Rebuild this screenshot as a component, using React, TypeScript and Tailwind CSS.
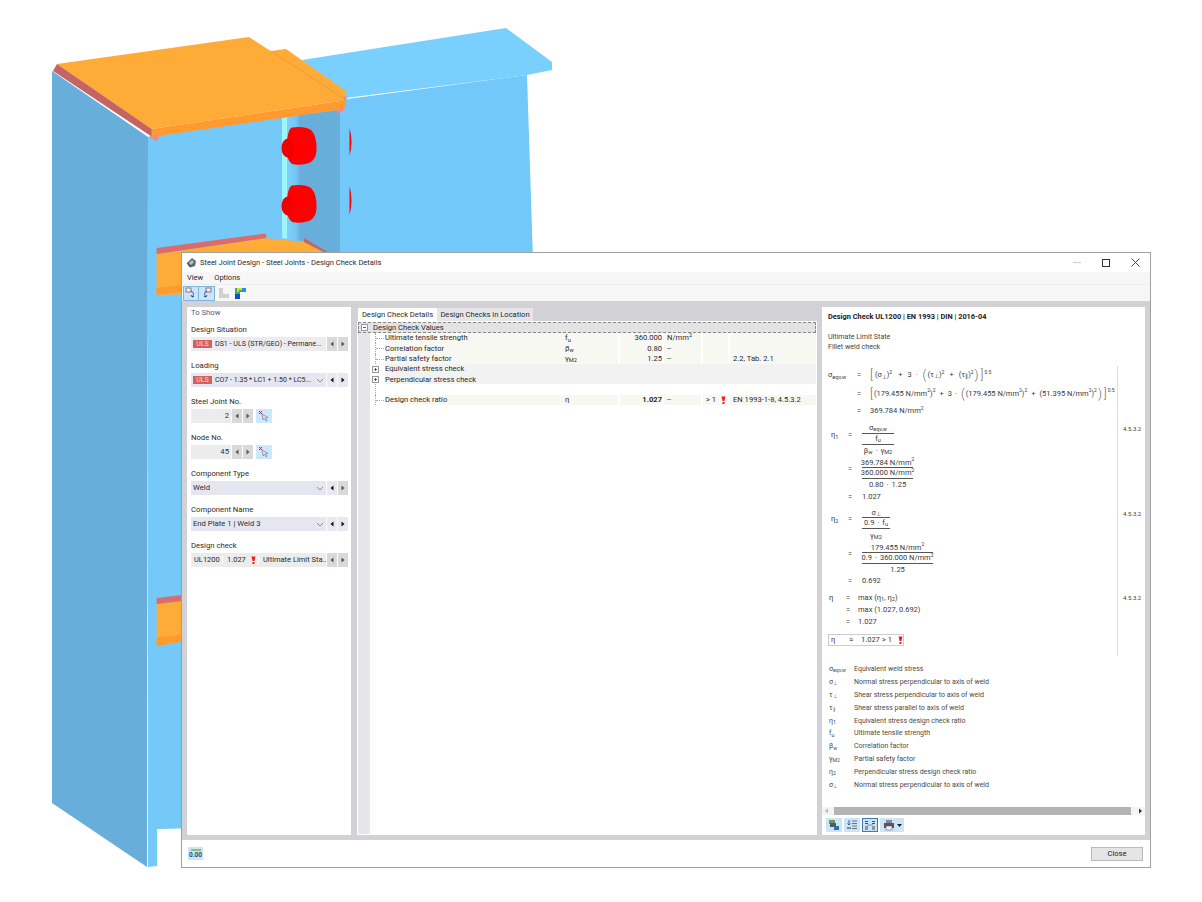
import React from 'react';

const SANS = "font-['Roboto','Noto_Sans',sans-serif]";

// Background 3D model of the joint
function Scene() {
  return (
    <svg className="absolute left-0 top-0" width="1202" height="902" viewBox="0 0 1202 902">
      <defs>
        <linearGradient id="webShade" x1="0" y1="0" x2="1" y2="0">
          <stop offset="0" stopColor="#7cd2fb" />
          <stop offset="0.7" stopColor="#74c6f4" />
          <stop offset="1" stopColor="#68aedb" />
        </linearGradient>
      </defs>
      {/* right beam */}
      <polygon points="340,100 527,75 533,260 533,700 340,700" fill="#72c8f8" />
      <polygon points="302,60 506,28 552,62 552,70 527,75 346,98" fill="#79cffe" />
      {/* column front face */}
      <polygon points="148,137 344,108 344,825 157,829 157,866 148,867" fill="#74c9f9" />
      {/* column side */}
      <polygon points="52,71 148,137 147,867 52,803" fill="#68aedb" />
      {/* web recess */}
      <polygon points="300,115 340,110 340,258 300,240" fill="#68aedb" />
      <polygon points="287,117 300,115 300,241 287,239" fill="url(#webShade)" />
      <polygon points="282,118 287,117 287,239 282,238" fill="#9ff5fe" />
      {/* top plate */}
      <polygon points="271,51 286,49 346,91 346,100" fill="#ffab38" />
      <polygon points="57,64 249,37 346,100 151,129" fill="#ffab38" />
      <line x1="271" y1="51" x2="346" y2="100" stroke="#f0922c" strokeWidth="1" />
      <polygon points="151,129 346,100 346,106 344,109 151,137" fill="#ff9a2e" />
      <polygon points="53,71 57,64 151.5,129 151.5,136.5" fill="#c46463" />
      <polygon points="148,137 160,134 157,141" fill="#f08a80" />
      <polygon points="336,110 347,107 338,114" fill="#f08a80" />
      <polygon points="344,96 348,98 344,100" fill="#f08a80" />
      {/* upper bolts */}
      <path d="M292 127.500Q305 126 311 130Q317 136 316.500 150Q316 160 309 163Q300 166 292 164Q286 160 287 146Q287 130 292 127.500Z" fill="#fe0000" />
      <ellipse cx="288" cy="148" rx="6.500" ry="9.500" fill="#f20000" />
      <path d="M292 185.500Q305 184 311 188Q317 194 316.500 208Q316 218 309 221Q300 224 292 222Q286 218 287 204Q287 188 292 185.500Z" fill="#fe0000" />
      <ellipse cx="288" cy="206" rx="6.500" ry="9.500" fill="#f20000" />
      <path d="M349.500 128 Q353.500 142 349.500 156 Z" fill="#fe0000" />
      <path d="M349.500 186 Q353.500 200 349.500 215 Z" fill="#fe0000" />
      {/* lower plate */}
      <polygon points="156.600,254 266,238 304,242 331,256 331,290 156.600,295" fill="#ffab38" />
      <polygon points="156.600,288 190,284 190,291 156.600,295" fill="#ff9a2e" />
      <polygon points="156.600,248 265.800,233.500 266.500,238 156.600,254" fill="#dc6b6b" />
      <polygon points="304,238 331,254 331,256 304,242" fill="#c86464" />
      {/* second stiffener */}
      <polygon points="156.700,604 190,600 190,640 156.700,646" fill="#ffab38" />
      <polygon points="156.700,637.300 190,634 190,640 156.700,646" fill="#ff9a2e" />
      <polygon points="156.700,598 190,594 190,600 156.700,604" fill="#dc6b6b" />
    </svg>
  );
}

function Flag() {
  return (
    <svg width="5" height="8" viewBox="0 0 5 8" className="inline-block shrink-0">
      <path d="M0.500 0.500h4L3.400 5H1.600z" fill="#f01818" />
      <rect x="1.500" y="6" width="2" height="2" fill="#f01818" />
    </svg>
  );
}

function TriBtn({ dir, dim }: { dir: 'l' | 'r'; dim?: boolean }) {
  return (
    <div className={`flex h-full w-[10px] items-center justify-center ${dim ? 'bg-[#d9d9d9]' : 'bg-[#e8e8f0]'}`}>
      <svg width="4" height="6" viewBox="0 0 4 6">
        <path d={dir === 'l' ? 'M3.500 0.500v5L0.500 3z' : 'M0.500 0.500v5L3.500 3z'} fill={dim ? '#555' : '#111'} />
      </svg>
    </div>
  );
}

function Chevron() {
  return (
    <svg width="8" height="5" viewBox="0 0 8 5" className="shrink-0">
      <path d="M1 1l3 3 3-3" fill="none" stroke="#777" strokeWidth="0.800" />
    </svg>
  );
}

function Field({ label, children }: { label: string; children: React.ReactNode }) {
  return (
    <div className="flex h-[36px] flex-col">
      <div className="flex h-[15px] items-center text-[7.7px] leading-none text-[#2a2a2a]">{label}</div>
      <div className="flex h-[14px] items-stretch">{children}</div>
    </div>
  );
}

function Uls() {
  return (
    <span className="mr-[3px] flex h-[7.500px] w-[19px] shrink-0 items-center justify-center bg-[#d2605f] text-[7px] leading-none text-[#f4dada]">
      ULS
    </span>
  );
}

function Combo({ children, chevron, grey }: { children: React.ReactNode; chevron?: boolean; grey?: boolean }) {
  return (
    <div className={`flex w-[135px] items-center overflow-hidden pl-[2px] pr-[2px] text-[7.7px] leading-none text-[#2a2a2a] ${grey ? 'bg-[#ececf0]' : 'bg-[#e6e6f0]'}`}>
      <div className="flex min-w-0 flex-1 items-center whitespace-nowrap">{children}</div>
      {chevron && <Chevron />}
    </div>
  );
}

function Arrows({ dimL, dimR }: { dimL?: boolean; dimR?: boolean }) {
  return (
    <div className="ml-px flex gap-px">
      <TriBtn dir="l" dim={dimL} />
      <TriBtn dir="r" dim={dimR} />
    </div>
  );
}

function PickIcon() {
  return (
    <div className="ml-[3px] flex w-[16px] items-center justify-center bg-[#cce8ff]">
      <svg width="12" height="12" viewBox="0 0 12 12">
        <path d="M1 1l3 3M4 1L1 4" stroke="#d02020" strokeWidth="1" />
        <path d="M4 4l1 6 1.400-1.600L8 11l1.200-.7-1.400-2.400L10 7.400z" fill="#d8dce0" stroke="#778" strokeWidth="0.600" />
      </svg>
    </div>
  );
}

function NumberInput({ value }: { value: string }) {
  return (
    <>
      <div className="flex w-[40px] items-center justify-end bg-[#ececec] pr-[2px] text-[7.7px] leading-none text-[#333]">{value}</div>
      <div className="ml-px flex gap-px">
        <TriBtn dir="l" dim />
        <TriBtn dir="r" dim />
      </div>
      <PickIcon />
    </>
  );
}

function LeftPanel() {
  return (
    <div className="mr-px flex w-[164px] flex-col bg-white pl-[4px]">
      <div className="h-[15px] pt-[2px] text-[7.7px] leading-[8px] text-[#4c5f8e]">To Show</div>
      <Field label="Design Situation">
        <Combo grey>
          <Uls />
          <span className="text-[7.1px]">DS1 - ULS (STR/GEO) - Permane...</span>
        </Combo>
        <Arrows dimL dimR />
      </Field>
      <Field label="Loading">
        <Combo chevron>
          <Uls />
          <span className="text-[7px]">CO7 - 1.35 * LC1 + 1.50 * LC5...</span>
        </Combo>
        <Arrows />
      </Field>
      <Field label="Steel Joint No.">
        <NumberInput value="2" />
      </Field>
      <Field label="Node No.">
        <NumberInput value="45" />
      </Field>
      <Field label="Component Type">
        <Combo chevron>Weld</Combo>
        <Arrows dimR />
      </Field>
      <Field label="Component Name">
        <Combo chevron>End Plate 1 | Weld 3</Combo>
        <Arrows />
      </Field>
      <Field label="Design check">
        <div className="flex w-[135px] items-center bg-[#ececec] text-[7.5px] leading-none text-[#2a2a2a]">
          <span className="w-[32px] shrink-0 border-r border-white pl-[3px]">UL1200</span>
          <span className="flex w-[36px] shrink-0 items-center gap-[5px] border-r border-white pl-[4px]">
            1.027 <Flag />
          </span>
          <span className="whitespace-nowrap pl-[4px]">Ultimate Limit Sta...</span>
        </div>
        <Arrows dimL dimR />
      </Field>
    </div>
  );
}

function Plus({ minus }: { minus?: boolean }) {
  return (
    <svg width="7" height="7" viewBox="0 0 7 7" className="shrink-0">
      <rect x="0.500" y="0.500" width="6" height="6" fill="#fff" stroke="#999" />
      <path d={minus ? 'M2 3.500h3' : 'M2 3.500h3M3.500 2v3'} stroke="#444" strokeWidth="0.800" />
    </svg>
  );
}

type RowData = {
  name: string;
  sym?: React.ReactNode;
  value?: string;
  unit?: React.ReactNode;
  ref?: string;
  expand?: boolean;
  bold?: boolean;
  check?: boolean;
};

const ROWS: RowData[] = [
  { name: 'Ultimate tensile strength', sym: <>f<sub>u</sub></>, value: '360.000', unit: <>N/mm<sup>2</sup></> },
  { name: 'Correlation factor', sym: <>β<sub>w</sub></>, value: '0.80', unit: '--' },
  { name: 'Partial safety factor', sym: <>γ<sub>M2</sub></>, value: '1.25', unit: '--', ref: '2.2, Tab. 2.1' },
  { name: 'Equivalent stress check', expand: true },
  { name: 'Perpendicular stress check', expand: true },
  { name: '' },
  { name: 'Design check ratio', sym: 'η', value: '1.027', unit: '--', ref: 'EN 1993-1-8, 4.5.3.2', bold: true, check: true },
];

function TreeRow({ row }: { row: RowData }) {
  const blank = row.name === '';
  return (
    <div className="flex h-[10.300px] items-stretch text-[7.6px] leading-none text-[#2a2a2a]">
      <div className="relative flex w-[15px] shrink-0 items-center justify-center pr-[4px]">
        {row.expand ? (
          <Plus />
        ) : (
          <>
            <span className="absolute bottom-0 left-[5px] top-0 border-l border-dotted border-[#aaa]" />
            {!blank && <span className="absolute left-[6px] top-[5px] w-[8px] border-t border-dotted border-[#aaa]" />}
          </>
        )}
      </div>
      {blank ? (
        <div className="flex-1" />
      ) : row.expand ? (
        <div className="flex flex-1 items-center bg-[#f2f2f2]">{row.name}</div>
      ) : (
        <div className="flex flex-1 bg-[#f8f8f3]">
          <div className="flex w-[175px] shrink-0 items-center">{row.name}</div>
          <div className="flex w-[60px] shrink-0 items-center border-r-2 border-white pl-[5px]">{row.sym}</div>
          <div className={`flex w-[44px] shrink-0 items-center justify-end border-r-2 border-white ${row.bold ? 'font-bold' : ''}`}>{row.value}</div>
          <div className="flex w-[39px] shrink-0 items-center border-r-2 border-white pl-[3px]">{row.unit}</div>
          <div className="flex w-[27px] shrink-0 items-center gap-[5px] border-r-2 border-white pl-[3px]">
            {row.check && (
              <>
                <span className="whitespace-nowrap">&gt; 1</span>
                <Flag />
              </>
            )}
          </div>
          <div className="flex flex-1 items-center pl-[3px]">{row.ref}</div>
        </div>
      )}
    </div>
  );
}

function CenterPanel() {
  return (
    <div className="flex w-[460px] flex-col">
      <div className="flex h-[14px] items-end pl-px text-[7.6px] leading-none text-[#2a2a2a]">
        <div className="flex h-[13px] w-[79px] items-center justify-center whitespace-nowrap bg-white">Design Check Details</div>
        <div className="flex h-[13px] w-[96px] items-center justify-center whitespace-nowrap bg-[#e6e6e8]">Design Checks in Location</div>
      </div>
      <div className="flex flex-1 flex-col bg-white p-px">
        <div className="flex h-[11px] items-center gap-[4px] border border-dashed border-[#888] bg-[#e3e3e3] pl-[2px] text-[7.6px] leading-none text-[#2a2a2a]">
          <Plus minus />
          <span className="ml-[1px]">Design Check Values</span>
        </div>
        <div className="flex flex-1">
          <div className="w-[12px] shrink-0 bg-[#e6e6ea]" />
          <div className="flex flex-1 flex-col">
            {ROWS.map((r, i) => (
              <TreeRow key={i} row={r} />
            ))}
          </div>
        </div>
      </div>
    </div>
  );
}

// one line on a fraction
function FLine({ h, children, rule }: { h: number; children: React.ReactNode; rule?: boolean }) {
  return (
    <div
      className={`flex items-center justify-center whitespace-nowrap leading-none ${rule ? 'border-b border-[#555]' : ''}`}
      style={{ height: h }}
    >
      {children}
    </div>
  );
}

function FRow({ top, label, eq, labelW, eqW, h, children }: { top?: number; label?: React.ReactNode; eq?: string; labelW: number; eqW: number; h: number; children: React.ReactNode }) {
  return (
    <div className="flex items-start" style={{ height: h }}>
      <div className="flex h-[10px] shrink-0 items-center leading-none" style={{ width: labelW, marginTop: top ?? 0 }}>{label}</div>
      <div className="flex h-[10px] shrink-0 items-center leading-none" style={{ width: eqW, marginTop: top ?? 0 }}>{eq ?? '='}</div>
      <div className="min-w-0">{children}</div>
    </div>
  );
}

const Big = ({ c }: { c: string }) => <span className="mx-[1px] text-[12px] font-light leading-none text-[#666]">{c}</span>;
const Ex = ({ c }: { c: string }) => <span className="relative top-[-3px] text-[5px] leading-none">{c}</span>;

function Formulas() {
  return (
    <div className="flex h-[290px] text-[7.500px] text-[#3a3a3a]">
      <div className="w-[289px] shrink-0">
        <div className="flex h-[18px] items-center leading-none">
          <span className="w-[29px]">σ<sub>eqv,w</sub></span>
          <span className="w-[12px]">=</span>
          <Big c="[" /><span className="mx-[1px]">(σ<sub>⊥</sub>)<Ex c="2" /></span>
          <span className="mx-[5px]">+</span>3<span className="mx-[4px]">·</span>
          <Big c="(" />(τ<sub>⊥</sub>)<Ex c="2" /><span className="mx-[5px]">+</span>(τ<sub>∥</sub>)<Ex c="2" /><Big c=")" /><Big c="]" /><Ex c="0.5" />
        </div>
        <div className="flex h-[19px] items-center whitespace-nowrap leading-none">
          <span className="w-[29px]" />
          <span className="w-[12px]">=</span>
          <Big c="[" />(179.455 N/mm<Ex c="2" />)<Ex c="2" /><span className="mx-[4px]">+</span>3<span className="mx-[3px]">·</span>
          <Big c="(" />(179.455 N/mm<Ex c="2" />)<Ex c="2" /><span className="mx-[4px]">+</span>(51.395 N/mm<Ex c="2" />)<Ex c="2" /><Big c=")" /><Big c="]" /><Ex c="0.5" />
        </div>
        <div className="flex h-[16px] items-center leading-none">
          <span className="w-[29px]" />
          <span className="w-[13px]">=</span>369.784 N/mm<Ex c="2" />
        </div>

        <div className="h-[4px]" />
        <FRow label={<span className="pl-[3px]">η<sub>1</sub></span>} labelW={20} eqW={14} top={7} h={35}>
          <div className="w-[32px]">
            <FLine h={11} rule>σ<sub>eqv,w</sub></FLine>
            <FLine h={10}>f<sub>u</sub></FLine>
            <div className="border-t border-[#555]"><FLine h={12}>β<sub>w</sub><span className="mx-[3px]">·</span>γ<sub>M2</sub></FLine></div>
          </div>
        </FRow>
        <FRow labelW={20} eqW={14} top={6} h={34}>
          <div className="w-[51px]">
            <FLine h={10} rule>369.784 N/mm<Ex c="2" /></FLine>
            <FLine h={11} rule>360.000 N/mm<Ex c="2" /></FLine>
            <FLine h={11}>0.80<span className="mx-[3px]">·</span>1.25</FLine>
          </div>
        </FRow>
        <FRow labelW={20} eqW={14} h={16}><span className="flex h-[10px] items-center leading-none">1.027</span></FRow>

        <FRow label={<span className="pl-[3px]">η<sub>2</sub></span>} labelW={20} eqW={14} top={6} h={35}>
          <div className="w-[28px]">
            <FLine h={10} rule>σ<sub>⊥</sub></FLine>
            <FLine h={11} rule>0.9<span className="mx-[3px]">·</span>f<sub>u</sub></FLine>
            <FLine h={13}>γ<sub>M2</sub></FLine>
          </div>
        </FRow>
        <FRow labelW={20} eqW={14} top={6} h={33}>
          <div className="w-[71px]">
            <FLine h={10} rule>179.455 N/mm<Ex c="2" /></FLine>
            <FLine h={11} rule>0.9<span className="mx-[3px]">·</span>360.000 N/mm<Ex c="2" /></FLine>
            <FLine h={11}>1.25</FLine>
          </div>
        </FRow>
        <FRow labelW={20} eqW={14} h={17}><span className="flex h-[10px] items-center leading-none">0.692</span></FRow>

        <FRow label={<span className="pl-[1px]">η</span>} labelW={18} eqW={12} h={12}><span className="flex h-[10px] items-center leading-none">max (η<sub>1</sub>, η<sub>2</sub>)</span></FRow>
        <FRow labelW={18} eqW={12} h={12}><span className="flex h-[10px] items-center leading-none">max (1.027, 0.692)</span></FRow>
        <FRow labelW={18} eqW={12} h={17}><span className="flex h-[10px] items-center leading-none">1.027</span></FRow>

        <div className="flex h-[12px] w-[76px] items-center border border-[#ccc] pl-[2px] leading-none">
          <span className="w-[18px]">η</span>
          <span className="w-[12px]">≈</span>
          <span className="w-[21px]">1.027</span>
          <span className="w-[16px]">&gt; 1</span>
          <Flag />
        </div>
      </div>
      <div className="flex w-[25px] shrink-0 flex-col border-l border-[#ddd] pl-[5px] text-[6px] leading-none">
        <div className="h-[60px]" />
        <div className="h-[85px]">4.5.3.2</div>
        <div className="h-[84px]">4.5.3.2</div>
        <div>4.5.3.2</div>
      </div>
    </div>
  );
}

const LEGEND: [React.ReactNode, string][] = [
  [<>σ<sub>eqv,w</sub></>, 'Equivalent weld stress'],
  [<>σ<sub>⊥</sub></>, 'Normal stress perpendicular to axis of weld'],
  [<>τ<sub>⊥</sub></>, 'Shear stress perpendicular to axis of weld'],
  [<>τ<sub>∥</sub></>, 'Shear stress parallel to axis of weld'],
  [<>η<sub>1</sub></>, 'Equivalent stress design check ratio'],
  [<>f<sub>u</sub></>, 'Ultimate tensile strength'],
  [<>β<sub>w</sub></>, 'Correlation factor'],
  [<>γ<sub>M2</sub></>, 'Partial safety factor'],
  [<>η<sub>2</sub></>, 'Perpendicular stress design check ratio'],
  [<>σ<sub>⊥</sub></>, 'Normal stress perpendicular to axis of weld'],
];

function RightPanel() {
  return (
    <div className="flex w-[323px] flex-col bg-white">
      <div className="flex flex-1 flex-col pl-[6px]">
        <div className="flex h-[20px] items-center text-[7.400px] font-bold leading-none text-[#222]">
          Design Check UL1200 | EN 1993 | DIN | 2016-04
        </div>
        <div className="mt-[5px] text-[7.100px] leading-[9.500px] text-[#444]">
          <div>Ultimate Limit State</div>
          <div>Fillet weld check</div>
        </div>
        <div className="h-[15px]" />
        <Formulas />
        <div className="mt-[7px] text-[7px] text-[#4a4a4a]">
          {LEGEND.map(([s, t], i) => (
            <div key={i} className="flex h-[12.900px] items-center leading-none">
              <span className="w-[26px] shrink-0 pl-px">{s}</span>
              <span>{t}</span>
            </div>
          ))}
        </div>
      </div>
      <div className="flex h-[8px] items-center bg-[#f4f4f4] px-[2px]">
        <svg width="5" height="6" viewBox="0 0 4 6"><path d="M3.500 0.500v5L0.500 3z" fill="#bbb" /></svg>
        <div className="ml-[5px] mr-[7px] h-full flex-1 bg-[#b4b4b4]" />
        <svg width="5" height="6" viewBox="0 0 4 6"><path d="M0.500 0.500v5L3.500 3z" fill="#333" /></svg>
      </div>
      <div className="flex h-[20px] items-center gap-[2px] pl-[4px]">
        <div className="flex h-[14px] w-[16px] items-center justify-center bg-[#cce4f7]">
          <svg width="12" height="12" viewBox="0 0 12 12">
            <rect x="1" y="1" width="6" height="4" fill="#6a9a5a" />
            <rect x="2" y="4" width="6" height="4" fill="#556" />
            <rect x="6" y="7" width="5" height="4" fill="#2c6fb0" />
          </svg>
        </div>
        <div className="flex h-[14px] w-[16px] items-center justify-center bg-[#cce4f7]">
          <svg width="12" height="12" viewBox="0 0 12 12" fill="none">
            <path d="M6 2h5M6 4.500h5M6 7h5M6 9.500h5" stroke="#667" strokeWidth="0.900" />
            <path d="M3 1v5M1.500 4.500L3 6l1.500-1.500" stroke="#1c5a9c" strokeWidth="0.900" />
            <path d="M1 9h4" stroke="#222" strokeWidth="0.900" />
          </svg>
        </div>
        <div className="flex h-[14px] w-[16px] items-center justify-center border border-[#3d7ab5] bg-[#cce4f7]">
          <svg width="12" height="12" viewBox="0 0 12 12" fill="none">
            <path d="M1 2.500h3M1 4.500h3M8 2.500h3M8 4.500h3M1 8h3M8 8h3M1 10h3M8 10h3" stroke="#223" strokeWidth="0.800" />
            <path d="M3 6.200L9 5.800" stroke="#556" strokeWidth="0.600" />
          </svg>
        </div>
        <div className="flex h-[14px] w-[24px] items-center justify-center gap-[2px] bg-[#cce4f7]">
          <svg width="12" height="12" viewBox="0 0 12 12">
            <rect x="3" y="1" width="6" height="3" fill="#889" />
            <rect x="1" y="4" width="10" height="5" fill="#556" />
            <rect x="3" y="7" width="6" height="4" fill="#eee" stroke="#556" strokeWidth="0.500" />
          </svg>
          <svg width="5" height="3" viewBox="0 0 5 3"><path d="M0 0h5L2.500 3z" fill="#222" /></svg>
        </div>
      </div>
    </div>
  );
}

export default function App() {
  return (
    <div className={`relative h-[902px] w-[1202px] overflow-hidden bg-white ${SANS}`}>
      <Scene />
      <div className="absolute left-[181px] top-[252px] flex h-[616px] w-[970px] flex-col border border-[#a0a0a0] bg-white">
        {/* title bar */}
        <div className="flex h-[19px] shrink-0 items-center pl-[4px] text-[7.500px] leading-none text-[#2a2a2a]">
          <svg width="11" height="11" viewBox="0 0 11 11" className="mr-[3px]">
            <path d="M1 6l5-5 4 3-1 5-5 1.500z" fill="#4a6a9a" />
            <path d="M3 6l3-3 2 2-3 3z" fill="#dfc25a" />
            <path d="M1 6l3 4" stroke="#223" strokeWidth="0.700" />
          </svg>
          Steel Joint Design - Steel Joints - Design Check Details
          <div className="ml-auto flex items-center">
            <div className="mr-[21px] w-[8px] border-t border-[#ccc]" />
            <div className="mr-[21px] h-[8px] w-[8px] border border-[#333]" />
            <svg width="9" height="9" viewBox="0 0 9 9" className="mr-[10px]">
              <path d="M0.500 0.500l8 8M8.500 0.500l-8 8" stroke="#333" strokeWidth="0.900" />
            </svg>
          </div>
        </div>
        {/* menu */}
        <div className="flex h-[13px] shrink-0 items-center gap-[11px] border-b border-[#ededed] bg-[#f6f6f6] pl-[5px] text-[7.500px] leading-none text-[#2a2a2a]">
          <span>View</span>
          <span>Options</span>
        </div>
        {/* toolbar */}
        <div className="flex h-[16px] shrink-0 items-center bg-[#f6f6f6] pl-[1px]">
          <div className="flex h-[15px] w-[16px] items-center justify-center border border-[#7fb4e0] bg-[#cce4f7]">
            <svg width="12" height="12" viewBox="0 0 12 12" fill="none">
              <rect x="1" y="1" width="5" height="4" fill="#eee" stroke="#667" strokeWidth="0.800" />
              <path d="M6 4c3 1 3 4 1 6M7 10l-1-2M7 10l2-.6" stroke="#1c4a80" strokeWidth="0.900" />
            </svg>
          </div>
          <div className="flex h-[15px] w-[16px] items-center justify-center border border-l-0 border-[#7fb4e0] bg-[#cce4f7]">
            <svg width="12" height="12" viewBox="0 0 12 12" fill="none">
              <rect x="5" y="1" width="5" height="4" fill="#eee" stroke="#667" strokeWidth="0.800" />
              <path d="M6 4c-3 1-3 4-1 6M5 10l1-2M5 10l-2-.6" stroke="#1c4a80" strokeWidth="0.900" />
            </svg>
          </div>
          <svg width="12" height="12" viewBox="0 0 12 12" className="ml-[3px]">
            <path d="M1 1h4v6h6v4H1z" fill="#d0d0d0" />
          </svg>
          <svg width="11" height="11" viewBox="0 0 11 11" className="ml-[5px]">
            <path d="M0 0h11v4H5v7H0z" fill="#30b070" />
            <path d="M2 0h5v2H4v2H2z" fill="#f0d020" />
            <path d="M7 0h4v4H7z" fill="#2090e0" />
            <path d="M0 6h5v5H0z" fill="#1050c0" />
          </svg>
        </div>
        {/* body */}
        <div className="flex h-[539px] shrink-0 gap-[5px] bg-[#d2d2d6] pb-[5px] pl-[5px] pr-[5px] pt-[6px]">
          <LeftPanel />
          <CenterPanel />
          <RightPanel />
        </div>
        {/* footer */}
        <div className="flex flex-1 items-center justify-between pl-[6px] pr-[7px]">
          <div className="flex h-[13px] w-[15px] flex-col items-center justify-center bg-[#cce4f7]">
            <div className="h-[2px] w-[10px] bg-[#8cc070]" />
            <span className="text-[6.500px] font-bold leading-[8px] text-[#2c4a7a]">0.00</span>
          </div>
          <div className="flex h-[14px] w-[52px] items-center justify-center border border-[#bbb] bg-[#e4e4e4] text-[7.500px] leading-none text-[#222]">Close</div>
        </div>
      </div>
    </div>
  );
}
